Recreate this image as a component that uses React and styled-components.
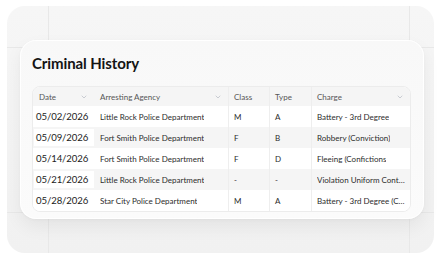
import React from 'react';
import styled, { createGlobalStyle, css } from 'styled-components';
import { ChevronDown } from 'lucide-react';

const GlobalStyle = createGlobalStyle`
  html, body {
    margin: 0;
    padding: 0;
    background: #fff;
  }
  body {
    font-family: Lato, "Noto Sans", sans-serif;
    -webkit-font-smoothing: antialiased;
  }
`;

const Page = styled.div`
  width: 441px;
  height: 262px;
  padding: 6px 7px 0 7px;
  box-sizing: border-box;
`;

const Backdrop = styled.div`
  width: 427px;
  height: 247px;
  box-sizing: border-box;
  border-radius: 18px;
  background-color: #f3f3f3;
  background-image: linear-gradient(#e8e8e8, #e8e8e8),
    linear-gradient(#e8e8e8, #e8e8e8), linear-gradient(#e8e8e8, #e8e8e8),
    linear-gradient(#e8e8e8, #e8e8e8),
    linear-gradient(180deg, #f6f6f6 0%, #f1f1f1 100%);
  background-size: 1px 100%, 1px 100%, 100% 1px, 100% 1px, 100% 100%;
  background-position: 41px 0, 402px 0, 0 41px, 0 206px, 0 0;
  background-repeat: no-repeat;
  padding: 34px 10px 0 13px;
`;

const Card = styled.section`
  width: 404px;
  height: 179px;
  box-sizing: border-box;
  border-radius: 16px;
  background: linear-gradient(180deg, #f8f8f8 0%, #fbfbfb 100%);
  border: 1px solid rgba(255, 255, 255, 0.9);
  box-shadow: 0 8px 18px rgba(0, 0, 0, 0.06), 0 1px 3px rgba(0, 0, 0, 0.03);
  padding: 12px 13px 0 11px;
`;

const Title = styled.h2`
  margin: 0 0 13px;
  font-size: 15px;
  line-height: 20px;
  font-weight: 700;
  color: #141414;
  letter-spacing: -0.1px;
`;

const Table = styled.div`
  width: 377px;
  border: 1px solid #ececec;
  border-radius: 8px;
  overflow: hidden;
  background: #fff;
`;

const Row = styled.div`
  display: grid;
  grid-template-columns: 61px 134px 41px 42px 99px;
  height: ${({ $header }) => ($header ? '19px' : '21px')};
  background: ${({ $striped, $header }) =>
    $header || $striped ? '#f5f5f5' : '#fff'};
`;

const Cell = styled.div`
  display: flex;
  align-items: center;
  min-width: 0;
  padding: 0 ${({ $tight }) => ($tight ? '3px' : '6px')} 0 6px;
  font-size: 8px;
  color: #2c2c2c;
  white-space: nowrap;
  overflow: hidden;

  ${({ $divider }) =>
    $divider &&
    css`
      box-shadow: inset 1px 0 0 #eeeeee;
    `}
`;

const CellText = styled.span`
  overflow: hidden;
  text-overflow: ellipsis;
`;

const HeadCell = styled(Cell)`
  justify-content: space-between;
  color: #555;
  padding-right: 6px;
`;

const DateCell = styled.div`
  display: flex;
  align-items: center;
  margin: 2px 0 2px 1px;
  padding: 0 2px;
  background: #fff;
  font-size: 9.6px;
  color: #1c1c1c;
  letter-spacing: -0.1px;
`;

const Chevron = styled(ChevronDown)`
  color: #a3a8b3;
  flex-shrink: 0;
`;

const columns = [
  { label: 'Date', sortable: true },
  { label: 'Arresting Agency', sortable: true },
  { label: 'Class' },
  { label: 'Type' },
  { label: 'Charge', sortable: true },
];

const records = [
  ['05/02/2026', 'Little Rock Police Department', 'M', 'A', 'Battery - 3rd Degree'],
  ['05/09/2026', 'Fort Smith Police Department', 'F', 'B', 'Robbery (Conviction)'],
  ['05/14/2026', 'Fort Smith Police Department', 'F', 'D', 'Fleeing (Confictions'],
  ['05/21/2026', 'Little Rock Police Department', '-', '-', 'Violation Uniform Controlled Substances Act'],
  ['05/28/2026', 'Star City Police Department', 'M', 'A', 'Battery - 3rd Degree (Conviction)'],
];

export default function App() {
  return (
    <>
      <GlobalStyle />
      <Page>
        <Backdrop>
          <Card>
            <Title>Criminal History</Title>
            <Table>
              <Row $header>
                {columns.map((col, i) => (
                  <HeadCell key={col.label} $divider={i > 1}>
                    <span>{col.label}</span>
                    {col.sortable && <Chevron size={8} strokeWidth={1.6} />}
                  </HeadCell>
                ))}
              </Row>
              {records.map(([date, agency, cls, type, charge], i) => (
                <Row key={date} $striped={i % 2 === 1}>
                  <DateCell>{date}</DateCell>
                  <Cell>
                    <CellText>{agency}</CellText>
                  </Cell>
                  <Cell $divider>{cls}</Cell>
                  <Cell $divider>{type}</Cell>
                  <Cell $divider $tight>
                    <CellText>{charge}</CellText>
                  </Cell>
                </Row>
              ))}
            </Table>
          </Card>
        </Backdrop>
      </Page>
    </>
  );
}
